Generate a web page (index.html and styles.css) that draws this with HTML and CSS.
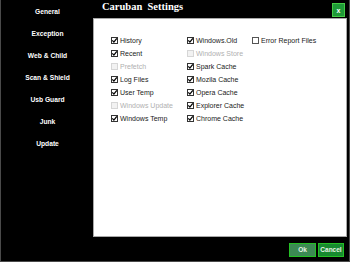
FILE: index.html
```html
<!DOCTYPE html>
<html>
<head>
<meta charset="utf-8">
<link rel="stylesheet" href="styles.css">
</head>
<body>
<div class="window">
  <nav class="sidebar">
    <div class="nav-item">General</div>
    <div class="nav-item">Exception</div>
    <div class="nav-item">Web &amp; Child</div>
    <div class="nav-item">Scan &amp; Shield</div>
    <div class="nav-item">Usb Guard</div>
    <div class="nav-item">Junk</div>
    <div class="nav-item">Update</div>
  </nav>
  <header class="titlebar">
    <div class="title">Caruban  Settings</div>
    <button class="close">x</button>
  </header>
  <main class="panel">
    <div class="checks">
      <label class="check"><span class="box on"><svg viewBox="0 0 7 7"><path d="M1.3 3.4 L2.9 5.1 L5.8 1.4"/></svg></span>History</label>
      <label class="check"><span class="box on"><svg viewBox="0 0 7 7"><path d="M1.3 3.4 L2.9 5.1 L5.8 1.4"/></svg></span>Recent</label>
      <label class="check off"><span class="box"></span>Prefetch</label>
      <label class="check"><span class="box on"><svg viewBox="0 0 7 7"><path d="M1.3 3.4 L2.9 5.1 L5.8 1.4"/></svg></span>Log Files</label>
      <label class="check"><span class="box on"><svg viewBox="0 0 7 7"><path d="M1.3 3.4 L2.9 5.1 L5.8 1.4"/></svg></span>User Temp</label>
      <label class="check off"><span class="box"></span>Windows Update</label>
      <label class="check"><span class="box on"><svg viewBox="0 0 7 7"><path d="M1.3 3.4 L2.9 5.1 L5.8 1.4"/></svg></span>Windows Temp</label>

      <label class="check"><span class="box on"><svg viewBox="0 0 7 7"><path d="M1.3 3.4 L2.9 5.1 L5.8 1.4"/></svg></span>Windows.Old</label>
      <label class="check off"><span class="box"></span>Windows Store</label>
      <label class="check"><span class="box on"><svg viewBox="0 0 7 7"><path d="M1.3 3.4 L2.9 5.1 L5.8 1.4"/></svg></span>Spark Cache</label>
      <label class="check"><span class="box on"><svg viewBox="0 0 7 7"><path d="M1.3 3.4 L2.9 5.1 L5.8 1.4"/></svg></span>Mozila Cache</label>
      <label class="check"><span class="box on"><svg viewBox="0 0 7 7"><path d="M1.3 3.4 L2.9 5.1 L5.8 1.4"/></svg></span>Opera Cache</label>
      <label class="check"><span class="box on"><svg viewBox="0 0 7 7"><path d="M1.3 3.4 L2.9 5.1 L5.8 1.4"/></svg></span>Explorer Cache</label>
      <label class="check"><span class="box on"><svg viewBox="0 0 7 7"><path d="M1.3 3.4 L2.9 5.1 L5.8 1.4"/></svg></span>Chrome Cache</label>

      <label class="check"><span class="box"></span>Error Report Files</label>
    </div>
  </main>
  <footer class="footer">
    <button class="btn btn-ok">Ok</button>
    <button class="btn btn-cancel">Cancel</button>
  </footer>
</div>
</body>
</html>
```
FILE: styles.css
```css
* { box-sizing: border-box; }
html, body { margin: 0; padding: 0; background: #000; }
.window {
  width: 350px;
  height: 262px;
  background: #000;
  border-left: 1px solid #4a4a4a;
  border-right: 1px solid #4a4a4a;
  border-bottom: 1px solid #4a4a4a;
  display: grid;
  grid-template-columns: 92px 1fr;
  grid-template-rows: 18px 219px 1fr;
  font-family: "Liberation Sans", Arial, sans-serif;
}
.sidebar {
  grid-column: 1;
  grid-row: 1 / 4;
  padding-top: 1px;
  display: flex;
  flex-direction: column;
}
.nav-item {
  height: 22px;
  line-height: 22px;
  text-align: center;
  color: #fff;
  font-weight: bold;
  font-size: 6.7px;
  padding-left: 1px;
}
.titlebar {
  grid-column: 2;
  grid-row: 1;
  display: flex;
  align-items: flex-start;
  justify-content: space-between;
  padding-left: 9px;
  padding-right: 4px;
}
.title {
  white-space: pre;
  font-family: "Liberation Serif", "Times New Roman", serif;
  font-weight: bold;
  font-size: 10.5px;
  line-height: 13px;
  color: #fff;
}
.close {
  margin-top: 3px;
  width: 13px;
  height: 14px;
  padding: 0;
  background: #1f9a38;
  border: 1px solid #46cc46;
  color: #fff;
  font-family: "Liberation Sans", Arial, sans-serif;
  font-weight: bold;
  font-size: 7px;
  line-height: 11px;
}
.panel {
  grid-column: 2;
  grid-row: 2;
  margin-right: 2px;
  background: #fff;
  border: 1px solid #a8a8a8;
  padding: 15px 0 0 17px;
}
.checks {
  display: grid;
  grid-template-columns: 76px 65px auto;
  grid-template-rows: repeat(7, 13px);
  grid-auto-flow: column;
}
.check {
  display: flex;
  align-items: center;
  gap: 2px;
  font-size: 7px;
  color: #222;
  white-space: nowrap;
}
.check.off { color: #b0b0b0; }
.box {
  width: 7px;
  height: 7px;
  border: 1px solid #555;
  background: #fff;
  flex: none;
  display: block;
  position: relative;
}
.box svg {
  position: absolute;
  left: -1px;
  top: -1px;
  width: 7px;
  height: 7px;
}
.box svg path {
  fill: none;
  stroke: #000;
  stroke-width: 1.3;
}
.box.on { border-color: #333; }
.check.off .box { border-color: #d6d6d6; background: #f2f2f2; }
.footer {
  grid-column: 2;
  grid-row: 3;
  display: flex;
  justify-content: flex-end;
  align-items: flex-start;
  padding-top: 6px;
  padding-right: 5px;
  gap: 2px;
}
.btn {
  height: 14px;
  padding: 0;
  border: 1px solid #25c025;
  color: #e8f4e8;
  font-family: "Liberation Sans", Arial, sans-serif;
  font-weight: bold;
  font-size: 6.5px;
  line-height: 12px;
}
.btn-ok { width: 27px; background: #3c8a54; }
.btn-cancel { width: 26px; background: #178a2f; }
```
